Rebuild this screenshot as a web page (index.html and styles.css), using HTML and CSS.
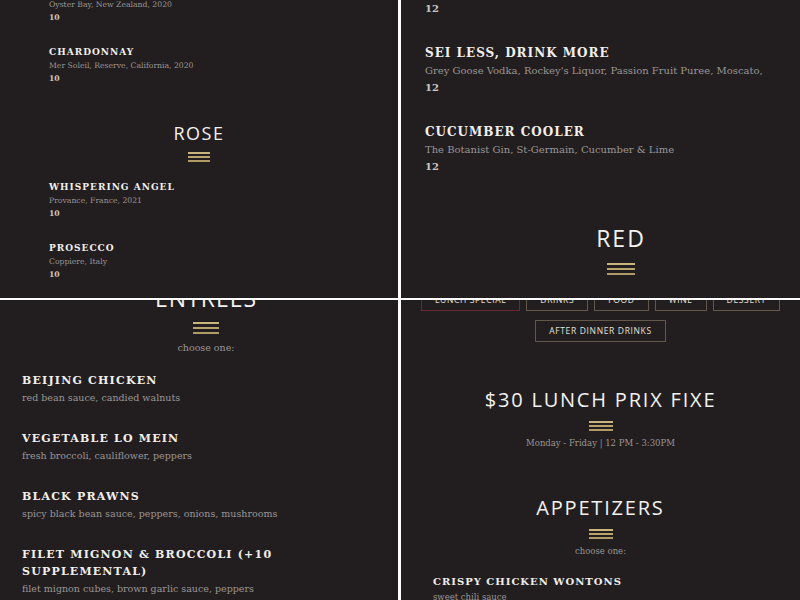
FILE: index.html
```html
<!DOCTYPE html>
<html lang="en">
<head>
    <meta charset="utf-8">
    <title>Menu</title>
    <link rel="stylesheet" href="styles.css">
</head>
<body>
    <div class="shots">
        <!-- wine : white / rose -->
        <section class="shot shot_wine">
            <div class="page">
                <div class="item">
                    <p class="i_desc">Oyster Bay, New Zealand, 2020</p>
                    <p class="i_price">10</p>
                </div>
                <div class="item">
                    <h3 class="i_name">Chardonnay</h3>
                    <p class="i_desc">Mer Soleil, Reserve, California, 2020</p>
                    <p class="i_price">10</p>
                </div>
                <div class="m_head">
                    <h2>Rose</h2>
                    <span class="deco"></span>
                </div>
                <div class="item">
                    <h3 class="i_name">Whispering Angel</h3>
                    <p class="i_desc">Provance, France, 2021</p>
                    <p class="i_price">10</p>
                </div>
                <div class="item">
                    <h3 class="i_name">Prosecco</h3>
                    <p class="i_desc">Coppiere, Italy</p>
                    <p class="i_price">10</p>
                </div>
            </div>
        </section>

        <!-- drinks : cocktails / red -->
        <section class="shot shot_drinks">
            <div class="page">
                <div class="item">
                    <p class="i_price">12</p>
                </div>
                <div class="item">
                    <h3 class="i_name">Sei Less, Drink More</h3>
                    <p class="i_desc">Grey Goose Vodka, Rockey's Liquor, Passion Fruit Puree, Moscato,</p>
                    <p class="i_price">12</p>
                </div>
                <div class="item">
                    <h3 class="i_name">Cucumber Cooler</h3>
                    <p class="i_desc">The Botanist Gin, St-Germain, Cucumber &amp; Lime</p>
                    <p class="i_price">12</p>
                </div>
                <div class="m_head">
                    <h2>Red</h2>
                    <span class="deco"></span>
                </div>
            </div>
        </section>

        <!-- lunch : entrees -->
        <section class="shot shot_entrees">
            <div class="page">
                <div class="m_head">
                    <h2>Entrees</h2>
                    <span class="deco"></span>
                    <p class="m_sub">choose one:</p>
                </div>
                <div class="item">
                    <h3 class="i_name">Beijing Chicken</h3>
                    <p class="i_desc">red bean sauce, candied walnuts</p>
                </div>
                <div class="item">
                    <h3 class="i_name">Vegetable Lo Mein</h3>
                    <p class="i_desc">fresh broccoli, cauliflower, peppers</p>
                </div>
                <div class="item">
                    <h3 class="i_name">Black Prawns</h3>
                    <p class="i_desc">spicy black bean sauce, peppers, onions, mushrooms</p>
                </div>
                <div class="item">
                    <h3 class="i_name">Filet Mignon &amp; Broccoli (+10 Supplemental)</h3>
                    <p class="i_desc">filet mignon cubes, brown garlic sauce, peppers</p>
                </div>
            </div>
        </section>

        <!-- lunch : top of page -->
        <section class="shot shot_lunch">
            <div class="page">
                <nav class="m_nav">
                    <a href="#none" class="on">Lunch Special</a>
                    <a href="#none">Drinks</a>
                    <a href="#none">Food</a>
                    <a href="#none">Wine</a>
                    <a href="#none">Dessert</a>
                    <a href="#none">After Dinner Drinks</a>
                </nav>
                <div class="m_head">
                    <h2>$30 Lunch Prix Fixe</h2>
                    <span class="deco"></span>
                    <p class="m_sub">Monday - Friday | 12 PM - 3:30PM</p>
                </div>
                <div class="m_head">
                    <h2>Appetizers</h2>
                    <span class="deco"></span>
                    <p class="m_sub">choose one:</p>
                </div>
                <div class="item">
                    <h3 class="i_name">Crispy Chicken Wontons</h3>
                    <p class="i_desc">sweet chili sauce</p>
                </div>
            </div>
        </section>
    </div>
</body>
</html>
```

FILE: styles.css
```css
body {margin: 0; padding: 0; background-color: #fff; font-family: "DejaVu Serif", serif;}
a {text-decoration: none; color: inherit;}
h2, h3, p {margin: 0; font-weight: normal;}
/* =============================================================== */
.shots {
    display: grid;
    grid-template-columns: 398px 399px;
    grid-template-rows: 298px 300px;
    gap: 2px 3px;
    width: 800px;
    height: 600px;
}
.shot {
    background-color: #221e1f;
    overflow: hidden;
}
.page {
    box-sizing: border-box;
}
/* 메뉴 항목 ======================================== */
.i_name {
    font-size: 12px;
    font-weight: bold;
    letter-spacing: 1px;
    line-height: 17px;
    text-transform: uppercase;
    color: #f1efec;
}
.i_desc {
    font-size: 10px;
    line-height: 17px;
    color: #9a9696;
}
.i_price {
    font-size: 10px;
    font-weight: bold;
    line-height: 17px;
    color: #cbc7c4;
}
/* 섹션 제목 ======================================== */
.m_head {
    text-align: center;
}
.m_head h2 {
    font-family: "Open Sans", sans-serif;
    font-size: 23px;
    font-weight: 400;
    line-height: 1.2;
    letter-spacing: 2px;
    text-transform: uppercase;
    color: #f3f2f0;
}
.deco {
    display: block;
    width: 28px;
    height: 12px;
    margin: 10px auto 0px;
    background: linear-gradient(#c9b47e 0 2px, transparent 2px 5px, #b9a46e 5px 7px, transparent 7px 10px, #b09b66 10px 12px);
}
.m_sub {
    font-size: 9.5px;
    line-height: 17px;
    color: #9a9696;
}
/* 와인 (작은 화면) ======================================== */
.shot_wine .page {
    width: 398px;
    margin-top: -2px;
}
.shot_wine .item {
    padding: 0px 49px;
    margin-top: 22px;
}
.shot_wine .item:first-child {
    margin-top: 0px;
}
.shot_wine .i_name {
    font-size: 9px;
    letter-spacing: 1px;
    line-height: 13px;
}
.shot_wine .i_desc,
.shot_wine .i_price {
    font-size: 7.7px;
    line-height: 13px;
}
.shot_wine .m_head {
    margin-top: 38px;
}
.shot_wine .m_head h2 {
    font-size: 18px;
    letter-spacing: 1.5px;
}
.shot_wine .deco {
    width: 22px;
    height: 10px;
    margin-top: 7px;
    background: linear-gradient(#c9b47e 0 2px, transparent 2px 4px, #b9a46e 4px 6px, transparent 6px 8px, #b09b66 8px 10px);
}
.shot_wine .m_head + .item {
    margin-top: 19px;
}
/* 음료 ======================================== */
.shot_drinks .page {
    width: 440px;
}
.shot_drinks .item {
    padding: 0px 24px;
    margin-top: 28px;
}
.shot_drinks .item:first-child {
    margin-top: 0px;
}
.shot_drinks .m_head {
    margin-top: 50px;
}
/* 앙트레 ======================================== */
.shot_entrees .page {
    width: 412px;
    margin-top: -15px;
}
.shot_entrees .m_head h2 {
    letter-spacing: 1px;
}
.shot_entrees .deco {
    width: 26px;
    margin-top: 9px;
}
.shot_entrees .m_sub {
    margin-top: 5px;
}
.shot_entrees .item {
    padding: 0px 22px;
    margin-top: 24px;
}
.shot_entrees .m_head + .item {
    margin-top: 16px;
}
.shot_entrees .i_name {
    font-size: 11px;
    letter-spacing: 1.2px;
}
.shot_entrees .i_desc {
    font-size: 9.5px;
}
/* 런치 ======================================== */
.shot_lunch .page {
    width: 399px;
}
.m_nav {
    display: flex;
    flex-wrap: wrap;
    justify-content: center;
    gap: 9px 6px;
    width: 372px;
    margin: -11px auto 0px;
}
.m_nav a {
    box-sizing: border-box;
    height: 22px;
    padding: 0px 13px;
    border: 1px solid #625949;
    font-family: "Open Sans", sans-serif;
    font-size: 8.5px;
    line-height: 20px;
    letter-spacing: 0.65px;
    text-transform: uppercase;
    color: #e4e0da;
}
.m_nav a.on {
    border-color: #6c2831;
}
.shot_lunch .m_head {
    margin-top: 44px;
}
.shot_lunch .m_nav + .m_head {
    margin-top: 46px;
}
.shot_lunch .m_head h2 {
    font-size: 20px;
    letter-spacing: 1.8px;
}
.shot_lunch .deco {
    width: 24px;
    height: 10px;
    margin-top: 9px;
    background: linear-gradient(#c9b47e 0 2px, transparent 2px 4px, #b9a46e 4px 6px, transparent 6px 8px, #b09b66 8px 10px);
}
.shot_lunch .m_sub {
    margin-top: 4px;
    font-size: 8.5px;
}
.shot_lunch .item {
    padding: 0px 32px;
    margin-top: 14px;
}
.shot_lunch .i_name {
    font-size: 10px;
    line-height: 15px;
}
.shot_lunch .i_desc {
    font-size: 8.5px;
}
```
